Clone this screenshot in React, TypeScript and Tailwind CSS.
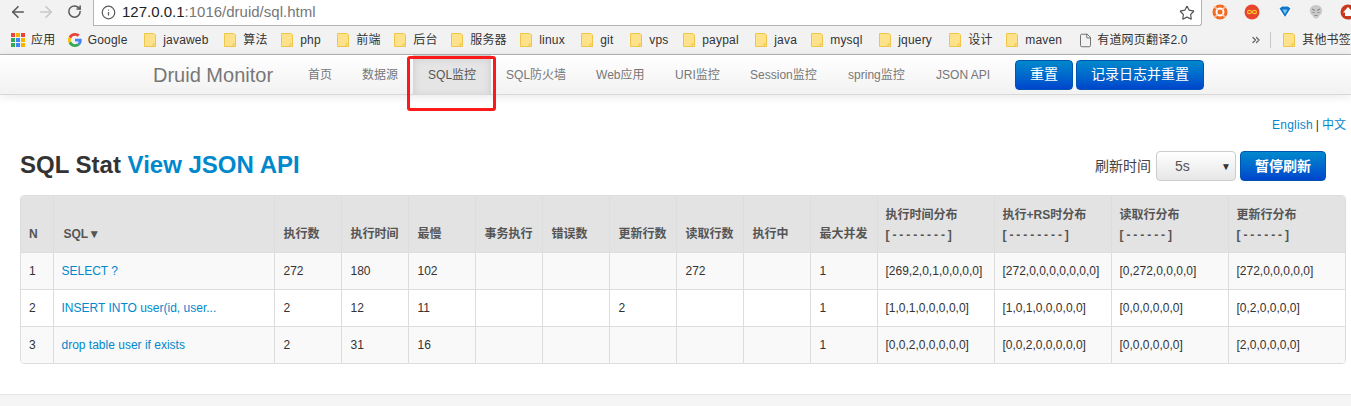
import { ArrowLeft, ArrowRight, ChevronsRight, File, Info, RotateCw, Star } from "lucide-react";

type Mark = { label: string; width: string; kind?: "folder" | "page" };

const bookmarks: Mark[] = [
  { label: "javaweb", width: "w-[80px]" },
  { label: "算法", width: "w-[57px]" },
  { label: "php", width: "w-[56px]" },
  { label: "前端", width: "w-[57px]" },
  { label: "后台", width: "w-[57px]" },
  { label: "服务器", width: "w-[69px]" },
  { label: "linux", width: "w-[61px]" },
  { label: "git", width: "w-[49px]" },
  { label: "vps", width: "w-[53px]" },
  { label: "paypal", width: "w-[72px]" },
  { label: "java", width: "w-[56px]" },
  { label: "mysql", width: "w-[68px]" },
  { label: "jquery", width: "w-[70px]" },
  { label: "设计", width: "w-[57px]" },
  { label: "maven", width: "w-[73px]" },
  { label: "有道网页翻译2.0", width: "w-[173px]", kind: "page" },
];

const navItems = [
  { label: "首页", width: "w-[54px]" },
  { label: "数据源", width: "w-[66px]" },
  { label: "SQL监控", width: "w-[78px]" },
  { label: "SQL防火墙", width: "w-[90px]" },
  { label: "Web应用", width: "w-[79px]" },
  { label: "URI监控", width: "w-[75px]" },
  { label: "Session监控", width: "w-[98px]" },
  { label: "spring监控", width: "w-[88px]" },
  { label: "JSON API", width: "w-[84px]" },
];

const colWidths = [32, 221, 67, 67, 67, 67, 67, 67, 67, 67, 67, 117, 117, 117, 117];

const rows = [
  ["1", "SELECT ?", "272", "180", "102", "", "", "", "272", "", "1", "[269,2,0,1,0,0,0,0]", "[272,0,0,0,0,0,0,0]", "[0,272,0,0,0,0]", "[272,0,0,0,0,0]"],
  ["2", "INSERT INTO user(id, user...", "2", "12", "11", "", "", "2", "", "", "1", "[1,0,1,0,0,0,0,0]", "[1,0,1,0,0,0,0,0]", "[0,0,0,0,0,0]", "[0,2,0,0,0,0]"],
  ["3", "drop table user if exists", "2", "31", "16", "", "", "", "", "", "1", "[0,0,2,0,0,0,0,0]", "[0,0,2,0,0,0,0,0]", "[0,0,0,0,0,0]", "[2,0,0,0,0,0]"],
];

const simpleHeads = ["执行数", "执行时间", "最慢", "事务执行", "错误数", "更新行数", "读取行数", "执行中", "最大并发"];

const distHeads = [
  ["执行时间分布", "[ - - - - - - - - ]"],
  ["执行+RS时分布", "[ - - - - - - - - ]"],
  ["读取行分布", "[ - - - - - - ]"],
  ["更新行分布", "[ - - - - - - ]"],
];

function FolderIcon() {
  return (
    <svg width="12" height="14" viewBox="0 0 12 14" className="shrink-0">
      <path d="M.5.5h9.500l1.500 1.500v11.500h-11z" fill="#fde28b" stroke="#f0c64a" />
      <path d="M9 11h2.500v2.500H9z" fill="#fde28b" stroke="#f0c64a" />
    </svg>
  );
}

function AppsIcon() {
  const colors = ["#e8453c", "#f4b400", "#e8453c", "#34a853", "#4285f4", "#f4b400", "#34a853", "#4285f4", "#f4b400"];
  return (
    <div className="grid w-[14px] shrink-0 grid-cols-3 gap-px">
      {colors.map((c, i) => (
        <div key={i} className="h-[4px] w-[4px]" style={{ backgroundColor: c }} />
      ))}
    </div>
  );
}

function GoogleIcon() {
  return (
    <svg width="14" height="14" viewBox="0 0 48 48" className="shrink-0">
      <path fill="#EA4335" d="M24 9.500c3.500 0 6.700 1.200 9.200 3.600l6.900-6.900C35.900 2.400 30.500 0 24 0 14.600 0 6.500 5.400 2.600 13.200l8 6.200C12.500 13.600 17.800 9.500 24 9.500z" />
      <path fill="#4285F4" d="M47 24.500c0-1.600-.1-3.100-.4-4.500H24v9h12.900c-.6 3-2.200 5.500-4.800 7.200l7.700 6C44.300 37.900 47 31.800 47 24.500z" />
      <path fill="#FBBC05" d="M10.600 28.600c-.5-1.400-.8-3-.8-4.600s.3-3.200.8-4.600l-8-6.200C.9 16.500 0 20.100 0 24s.9 7.500 2.600 10.800l8-6.200z" />
      <path fill="#34A853" d="M24 48c6.500 0 11.900-2.100 15.800-5.800l-7.700-6c-2.100 1.400-4.900 2.300-8.100 2.300-6.200 0-11.500-4.200-13.400-9.800l-8 6.200C6.500 42.600 14.600 48 24 48z" />
    </svg>
  );
}

function Extensions() {
  return (
    <div className="flex shrink-0 items-center">
      <svg width="16" height="16" viewBox="0 0 16 16" className="ml-[10px] shrink-0">
        <circle cx="8" cy="8" r="7.500" fill="#f26a22" />
        <circle cx="8" cy="8" r="3.500" fill="none" stroke="#fff" strokeWidth="2" />
        <path d="M3 3l3 3M13 3l-3 3M3 13l3-3M13 13l-3-3" stroke="#fbd3b8" strokeWidth="1.500" />
      </svg>
      <svg width="16" height="16" viewBox="0 0 16 16" className="ml-[16px] shrink-0">
        <circle cx="8" cy="8" r="7.500" fill="#e8452f" />
        <path d="M8 8C6.500 5.500 3.500 6 3.500 8s3 2.500 4.500 0 4.500-2 4.500 0-3 2.500-4.500 0z" fill="none" stroke="#f7c325" strokeWidth="1.200" />
      </svg>
      <svg width="16" height="16" viewBox="0 0 16 16" className="ml-[17px] shrink-0">
        <path d="M1 5c0-2.500 2-4 4-4h6c2 0 4 1.500 4 4 0 3-4 7-7 10C5 12 1 8 1 5z" fill="#ffffff" stroke="#dcdcdc" strokeWidth="0.500" />
        <path d="M2.500 4.500 5 2.500h6l2.500 2-5.500 8.500z" fill="#1378c8" />
        <path d="M5.500 5.500h5L8 10z" fill="#7cc4f2" />
      </svg>
      <svg width="16" height="16" viewBox="0 0 16 16" className="ml-[15px] shrink-0">
        <path d="M2 8c-1-4 2-7 6-7s7 3 6 7c-.5 2.500-2 3-3 4 0 1.500-1 2.500-3 2.500S5 13.500 5 12c-1-1-2.500-1.500-3-4z" fill="#c9c9c9" />
        <path d="M4 5l3 1.500M12 5 9 6.500M4.500 8.500h2M9.500 8.500h2M6.500 11.500h3" stroke="#8a8a8a" strokeWidth="1.100" />
      </svg>
      <svg width="16" height="16" viewBox="0 0 16 16" className="ml-[16px] shrink-0">
        <circle cx="8" cy="8" r="7.500" fill="#c8381f" />
        <path d="M8 3 13 8.500h-2v3.500H5V8.500H3z" fill="#fff" />
      </svg>
    </div>
  );
}

function BlueButton({ label, width, bold }: { label: string; width: string; bold?: boolean }) {
  return (
    <button
      className={`h-[30px] ${width} rounded-[4px] border border-[#0055b0] bg-gradient-to-b from-[#0088cc] to-[#0044cc] text-[14px] text-white ${bold ? "font-bold" : ""}`}
    >
      {label}
    </button>
  );
}

export default function App() {
  return (
    <div className="relative h-[406px] w-[1351px] overflow-hidden bg-white font-['Liberation_Sans','Noto_Sans_CJK_SC',sans-serif] text-[12px] text-[#333]">
      {/* browser chrome */}
      <div className="flex h-[26px] items-start bg-[#f2f2f2]">
        <ArrowLeft size={18} strokeWidth={2.2} className="ml-[9px] mt-[3px] shrink-0 text-[#5a5a5a]" />
        <ArrowRight size={18} strokeWidth={2.2} className="ml-[10px] mt-[3px] shrink-0 text-[#c8c8c8]" />
        <RotateCw size={15} strokeWidth={2.4} className="ml-[12px] mt-[4px] shrink-0 text-[#5a5a5a]" />
        <div className="ml-[11px] flex h-[26px] w-[1109px] shrink-0 items-center rounded-br-[3px] border-r border-b border-l border-[#b4b4b4] bg-white">
          <Info size={15} className="ml-[7px] text-[#5a5a5a]" />
          <span className="ml-[6px] text-[15px] text-[#777]">
            <span className="text-[#222]">127.0.0.1</span>:1016/druid/sql.html
          </span>
          <Star size={16} strokeWidth={1.8} className="ml-auto mr-[6px] text-[#555]" />
        </div>
        <div className="mt-[4px] shrink-0">
          <Extensions />
        </div>
      </div>
      <div className="flex h-[29px] items-center border-b border-[#b4b4b4] bg-[#f2f2f2] pl-[11px] tracking-[0.2px] text-[#333]">
        <AppsIcon />
        <span className="ml-[6px] w-[37px]">应用</span>
        <GoogleIcon />
        <span className="ml-[6px] w-[57px]">Google</span>
        {bookmarks.map((b) => (
          <div key={b.label} className={`flex shrink-0 items-center gap-[7px] ${b.width}`}>
            {b.kind === "page" ? <File size={15} strokeWidth={1.3} className="-ml-px -mr-[3px] text-[#555]" /> : <FolderIcon />}
            <span className="whitespace-nowrap">{b.label}</span>
          </div>
        ))}
        <ChevronsRight size={12} strokeWidth={2.5} className="-ml-[2px] shrink-0 text-[#666]" />
        <div className="ml-[8px] h-[16px] w-px shrink-0 bg-[#c8c8c8]" />
        <div className="ml-[12px] flex shrink-0 items-center gap-[7px] whitespace-nowrap">
          <FolderIcon />
          <span>其他书签</span>
        </div>
      </div>

      {/* navbar */}
      <div className="flex h-[40px] items-center border-b border-[#d8d8d8] bg-gradient-to-b from-white to-[#f2f2f2] pl-[153px] shadow-[0_1px_10px_rgba(0,0,0,0.1)]">
        <span className="text-[20px] text-[#777]">Druid Monitor</span>
        <div className="ml-[20px] flex h-full items-center text-[#777]">
          {navItems.map((item) => (
            <div
              key={item.label}
              className={`flex h-full shrink-0 items-center whitespace-nowrap pl-[15px] ${item.width} ${item.label === "SQL监控" ? "bg-[#e5e5e5] text-[#555] shadow-[inset_0_3px_8px_rgba(0,0,0,0.125)]" : ""}`}
            >
              {item.label}
            </div>
          ))}
        </div>
        <div className="ml-[10px] flex gap-[3px]">
          <BlueButton label="重置" width="w-[58px]" />
          <BlueButton label="记录日志并重置" width="w-[128px]" />
        </div>
      </div>

      {/* annotation */}
      <div className="absolute left-[407px] top-[56px] h-[55px] w-[89px] rounded-[3px] border-[3px] border-[#fb1a1a]" />

      {/* page */}
      <div className="flex justify-end pr-[5px] pt-[21px] text-[#0088cc]">
        <span className="tracking-[0.2px]">English</span>
        <span className="mx-[3px] text-[#333]">|</span>
        <span>中文</span>
      </div>

      <div className="mt-[12px] flex h-[40px] items-center pl-[20px] pr-[25px]">
        <h1 className="pb-[2px] text-[24px] font-bold text-[#333]">
          SQL Stat <span className="text-[#0088cc]">View JSON API</span>
        </h1>
        <span className="ml-auto text-[14px] text-[#444]">刷新时间</span>
        <div className="ml-[5px] flex h-[30px] w-[80px] items-center justify-between rounded-[4px] border border-[#ccc] bg-gradient-to-b from-white to-[#e6e6e6] pl-[18px] pr-[4px] text-[14px] text-[#555]">
          5s
          <span className="text-[10px] text-[#333]">▼</span>
        </div>
        <div className="ml-[4px]">
          <BlueButton label="暂停刷新" width="w-[86px]" bold />
        </div>
      </div>

      <div className="ml-[20px] mt-[9px] w-[1326px] overflow-hidden rounded-[4px] border border-[#ddd]">
        <table className="w-full table-fixed border-collapse">
          <colgroup>
            {colWidths.map((w, i) => (
              <col key={i} style={{ width: w }} />
            ))}
          </colgroup>
          <thead>
            <tr className="h-[56px] bg-[#e3e3e3] text-left align-bottom text-[12px] font-bold text-[#555]">
              <th className="px-[8px] pb-[9px]">N</th>
              <th className="border-l border-[#ddd] px-[10px] pb-[9px]">SQL▼</th>
              {simpleHeads.map((h) => (
                <th key={h} className="border-l border-[#ddd] pb-[9px] pl-[9px] pr-[8px]">
                  {h}
                </th>
              ))}
              {distHeads.map(([a, b]) => (
                <th key={a} className="border-l border-[#ddd] px-[8px] pb-[7px] leading-[20px]">
                  {a}
                  <br />
                  <span className="tracking-[-0.2px]">{b}</span>
                </th>
              ))}
            </tr>
          </thead>
          <tbody>
            {rows.map((r, i) => (
              <tr key={r[0]} className={`h-[37px] border-t border-[#ddd] ${i % 2 === 0 ? "bg-[#f9f9f9]" : "bg-white"}`}>
                {r.map((c, j) => (
                  <td
                    key={j}
                    className={`${j >= 2 && j <= 10 ? "pl-[9px] pr-[8px]" : "px-[8px]"} ${j > 0 ? "border-l border-[#ddd]" : ""} ${j === 1 ? "text-[#0088cc]" : ""}`}
                  >
                    {c}
                  </td>
                ))}
              </tr>
            ))}
          </tbody>
        </table>
      </div>

      <div className="mt-[30px] h-[20px] border-t border-[#e5e5e5] bg-[#f5f5f5]" />
    </div>
  );
}
